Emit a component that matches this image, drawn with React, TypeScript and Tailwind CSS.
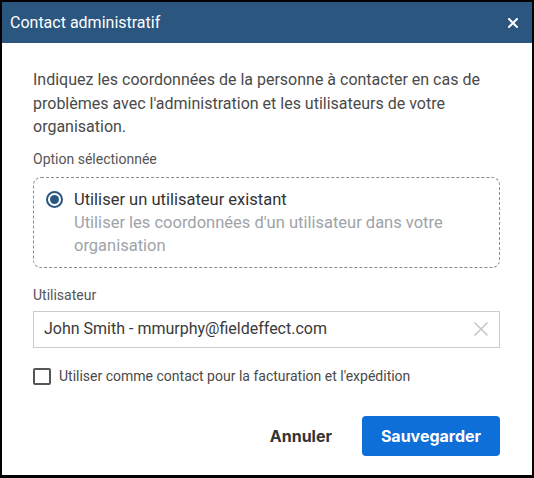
export default function App() {
  return (
    <div className="w-[534px] h-[478px] bg-black pt-[2px] pl-[2px] pr-[2px] pb-[3px] font-['Roboto',sans-serif]">
      <div className="flex h-full flex-col bg-white">
        <div className="flex h-[41px] items-center justify-between bg-[#2a5680] pl-[8px] pr-[14px]">
          <span className="text-[16px] text-white">Contact administratif</span>
          <svg width="10" height="10" viewBox="0 0 10 10" className="mt-[1px]">
            <path d="M1 1L9 9M9 1L1 9" stroke="white" strokeWidth="2" strokeLinecap="square" />
          </svg>
        </div>
        <div className="flex flex-col pl-[31px] pr-[32px] pt-[25px]">
          <p className="text-[16px] leading-[23.5px] text-[#4a4a4a]">
            Indiquez les coordonnées de la personne à contacter en cas de problèmes avec l'administration et les utilisateurs de votre organisation.
          </p>
          <div className="mt-[10px] text-[14px] leading-[20px] text-[#555]">Option sélectionnée</div>
          <div className="mt-[8px] flex h-[91px] gap-[11px] rounded-[8px] border border-dashed border-[#8a8a8a] pl-[12px] pr-[12px] pt-[10px]">
            <div className="mt-[3px] flex h-[17px] w-[17px] shrink-0 items-center justify-center rounded-full border-2 border-[#2a5680]">
              <div className="h-[9px] w-[9px] rounded-full bg-[#2a5680]" />
            </div>
            <div className="flex flex-col text-[16.5px] leading-[23px]">
              <span className="text-[#333]">Utiliser un utilisateur existant</span>
              <span className="text-[#9ea3a8]">Utiliser les coordonnées d'un utilisateur dans votre organisation</span>
            </div>
          </div>
          <div className="mt-[17px] text-[14px] leading-[20px] text-[#555]">Utilisateur</div>
          <div className="mt-[6px] flex h-[37px] items-center justify-between border border-[#cccccc] pl-[10px] pr-[10px]">
            <span className="text-[16px] text-[#3a3a3a]">John Smith - mmurphy@fieldeffect.com</span>
            <svg width="16" height="16" viewBox="0 0 16 16">
              <path d="M1.5 1.5L14.5 14.5M14.5 1.5L1.5 14.5" stroke="#c8c8c8" strokeWidth="1.6" />
            </svg>
          </div>
          <div className="mt-[18px] flex items-center gap-[8px]">
            <div className="h-[17px] w-[18px] rounded-[2px] border-2 border-[#555]" />
            <span className="text-[14px] text-[#4a4a4a]">Utiliser comme contact pour la facturation et l'expédition</span>
          </div>
          <div className="mt-[29px] flex justify-end gap-[14px] font-['Inter',sans-serif]">
            <button className="h-[40px] px-[16px] text-[16px] font-bold text-[#333]">Annuler</button>
            <button className="h-[40px] w-[138px] rounded-[4px] bg-[#0f6fd9] text-[16px] font-bold text-white">Sauvegarder</button>
          </div>
        </div>
      </div>
    </div>
  );
}
